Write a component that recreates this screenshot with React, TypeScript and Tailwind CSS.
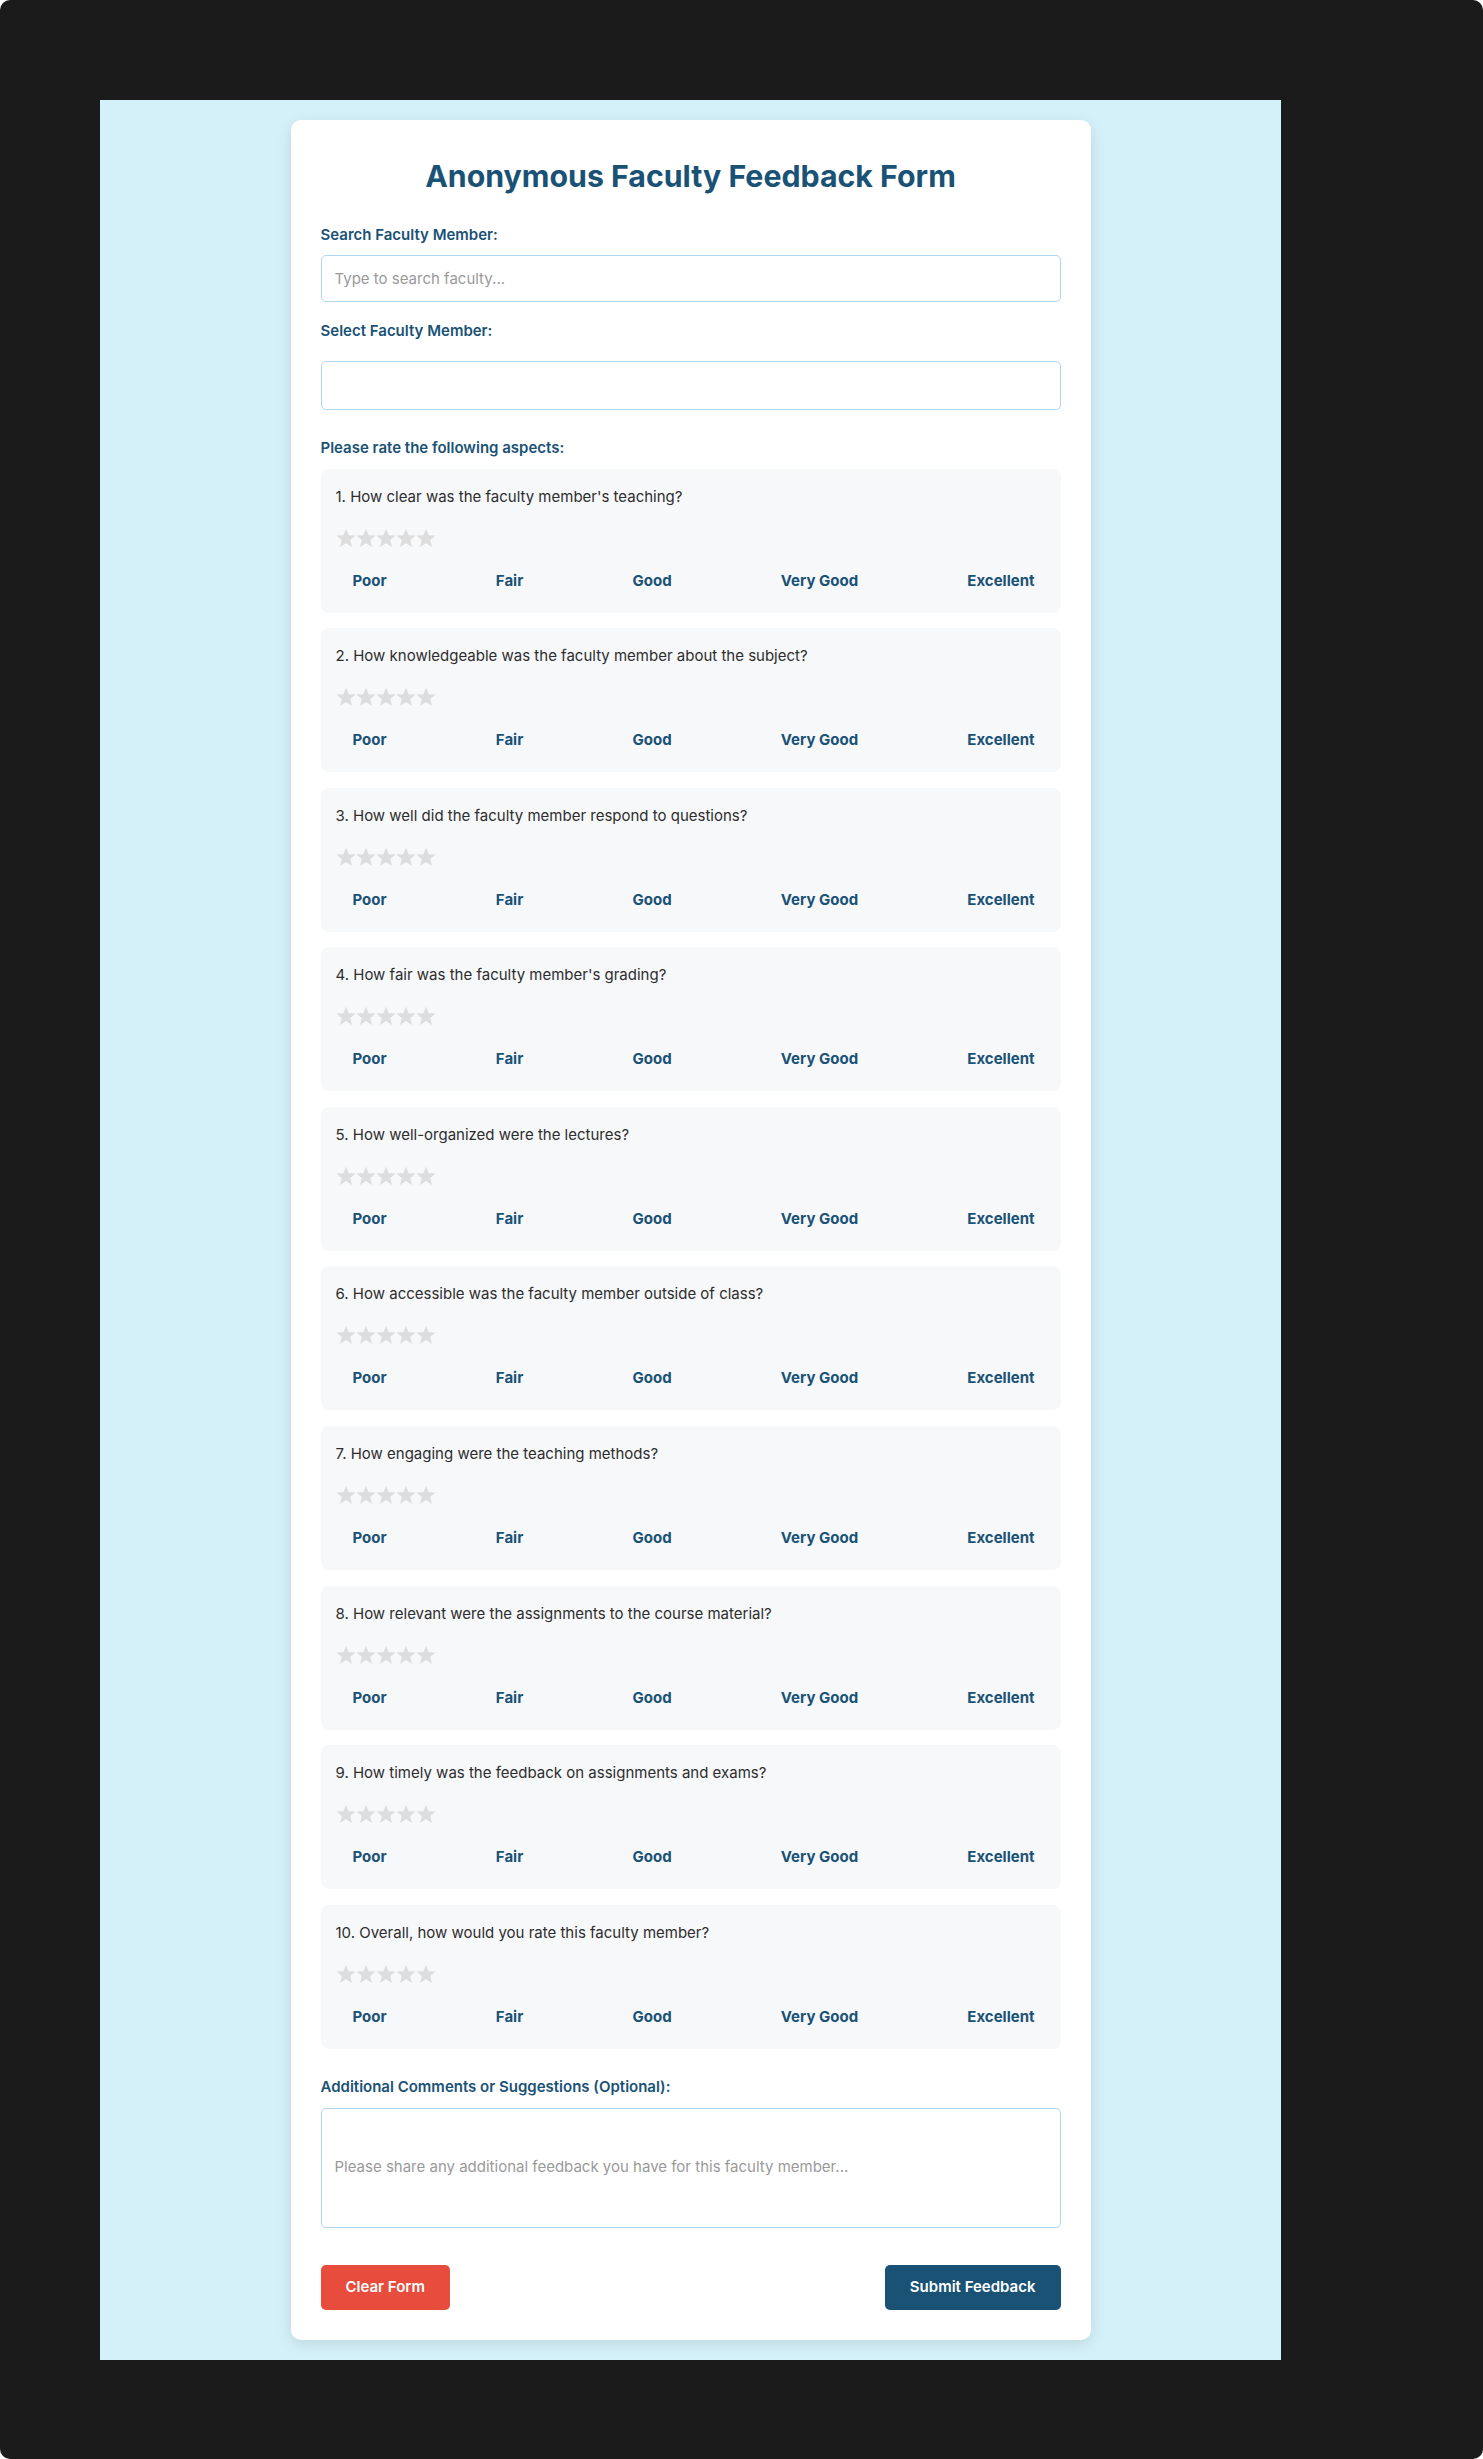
import { useState } from 'react'

const questions = [
  "How clear was the faculty member's teaching?",
  'How knowledgeable was the faculty member about the subject?',
  'How well did the faculty member respond to questions?',
  "How fair was the faculty member's grading?",
  'How well-organized were the lectures?',
  'How accessible was the faculty member outside of class?',
  'How engaging were the teaching methods?',
  'How relevant were the assignments to the course material?',
  'How timely was the feedback on assignments and exams?',
  'Overall, how would you rate this faculty member?',
]

const scale = ['Poor', 'Fair', 'Good', 'Very Good', 'Excellent']

function Star({ filled }: { filled: boolean }) {
  return (
    <svg width="20" height="20" viewBox="0 0 20 20" className="block">
      <polygon
        points="10,0.8 12.6,7.2 19.6,7.6 14.2,12 16,18.9 10,15.1 4,18.9 5.8,12 0.4,7.6 7.4,7.2"
        fill={filled ? '#f5b301' : '#dddddd'}
      />
    </svg>
  )
}

function RatingCard({ index, text }: { index: number; text: string }) {
  const [value, setValue] = useState(0)

  return (
    <div className="rounded-[8px] bg-[#f7f8fa] px-[15px] pt-[17px] pb-[20.5px]">
      <p className="text-[15px] leading-[1.5] text-[#2d2d2d]">
        {index + 1}. {text}
      </p>
      <div className="mt-[19.5px] flex h-[20px]">
        {scale.map((_, i) => (
          <button key={i} type="button" onClick={() => setValue(i + 1)} className="cursor-pointer">
            <Star filled={i < value} />
          </button>
        ))}
      </div>
      <div className="mt-[22px] flex justify-between pl-[17px] pr-[11px]">
        {scale.map((s) => (
          <span key={s} className="text-[15px] font-bold leading-[1.5] text-[#1a5276]">
            {s}
          </span>
        ))}
      </div>
    </div>
  )
}

export default function App() {
  const labelCls = 'block text-[15px] font-semibold leading-[1.5] text-[#1a5276]'

  return (
    <div className="bg-white font-['Inter','Liberation_Sans',sans-serif]">
      <div className="h-[2459px] rounded-[10px] bg-[#1b1b1b] pt-[100px]">
        <div className="ml-[100px] w-[1181px] bg-[#d4f0f8] py-[20px]">
          <div className="mx-auto w-[800px] rounded-[10px] bg-white p-[30px] shadow-[0_4px_15px_rgba(0,0,0,0.1)]">
            <h1 className="mt-[6.6px] mb-[28.5px] text-center text-[30.3px] font-bold leading-[38.4px] text-[#1a5276]">
              Anonymous Faculty Feedback Form
            </h1>

            <label className={labelCls}>Search Faculty Member:</label>
            <input
              type="text"
              placeholder="Type to search faculty..."
              className="mt-[9px] h-[47px] w-full rounded-[5px] border border-[#aed6f1] px-[13px] text-[15px] text-[#333] outline-none placeholder:text-[#9a9a9a]"
            />

            <label className={`${labelCls} mt-[17.5px]`}>Select Faculty Member:</label>
            <div className="mt-[18.5px] h-[49px] w-full rounded-[5px] border border-[#aed6f1] bg-white" />

            <label className={`${labelCls} mt-[27px]`}>Please rate the following aspects:</label>
            <div className="mt-[9.5px] flex flex-col gap-[15.6px]">
              {questions.map((q, i) => (
                <RatingCard key={i} index={i} text={q} />
              ))}
            </div>

            <label className={`${labelCls} mt-[27px]`}>Additional Comments or Suggestions (Optional):</label>
            <textarea
              placeholder="Please share any additional feedback you have for this faculty member..."
              className="mt-[10px] block h-[120px] w-full resize-none rounded-[5px] border border-[#aed6f1] px-[13px] pt-[47px] text-[15px] leading-[1.5] text-[#333] outline-none placeholder:text-[#9a9a9a]"
            />

            <div className="mt-[36.3px] flex items-center justify-between">
              <button
                type="button"
                className="h-[45px] rounded-[5px] bg-[#e74c3c] px-[25px] text-[15px] font-semibold text-white"
              >
                Clear Form
              </button>
              <button
                type="button"
                className="h-[45px] rounded-[5px] bg-[#1a5276] px-[25px] text-[15px] font-semibold text-white"
              >
                Submit Feedback
              </button>
            </div>
          </div>
        </div>
      </div>
    </div>
  )
}
